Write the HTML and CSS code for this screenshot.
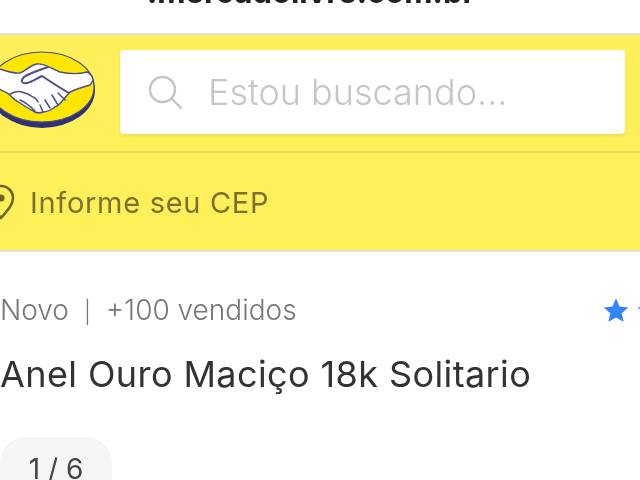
FILE: index.html
```html
<!DOCTYPE html>
<html lang="pt-BR">

<head>
    <meta charset="UTF-8">
    <meta name="viewport" content="width=device-width, initial-scale=1.0">
    <title>Anel Ouro Maciço 18k Solitario</title>
    <link rel="stylesheet" href="styles.css">
</head>

<body>
    <div class="page">
        <div class="url-bar">
            <span class="url-text">.mercadolivre.com.br</span>
        </div>
        <header class="nav">
            <div class="nav-top">
                <svg class="logo" viewBox="-10 50 106 80" aria-hidden="true">
                    <ellipse cx="42" cy="90" rx="53" ry="38" fill="#2d3277" />
                    <ellipse cx="42" cy="87" rx="52" ry="35" fill="#ffe600" stroke="#4a4f8c" stroke-width="1.2" />
                    <path d="M-10 66 C0 68 10 74 20 73 C26 71 30 65 37 64 C44 63 50 68 60 72 C70 74 80 74 87 72 C91 74 93 77 93 80 C92 83 91 84 90 85 C83 87 76 89 70 92 C67 95 65 98 63 100 C60 104 58 106 55 107 C51 110 47 112 43 112 C40 113 37 113 35 112 C29 109 25 106 20 103 C15 100 12 98 10 95 C6 92 3 90 -10 86Z" fill="#fff" stroke="#4a4f8c" stroke-width="1.4" stroke-linejoin="round" />
                    <path d="M48 67 C40 70 30 73 24 77 C20 81 22 84 27 83 C32 82 37 78 42 76 C48 80 60 88 69 93" fill="none" stroke="#4a4f8c" stroke-width="2" stroke-linecap="round" stroke-linejoin="round" />
                    <path d="M10 94 C14 92 18 91 22 92 C26 93 30 95 33 97 C36 98 37 100 38 102 M58 93 L65 100 M52 95 L58 105 M45 100 L50 108 M40 105 L43 112 M20 100 C25 102 30 106 35 111" fill="none" stroke="#4a4f8c" stroke-width="1.5" stroke-linecap="round" />
                </svg>
                <div class="search">
                    <svg class="search-icon" viewBox="0 0 34 34" aria-hidden="true">
                        <circle cx="14.5" cy="14.5" r="12.5" fill="none" stroke="#c4c4c4" stroke-width="2.4" />
                        <path d="M23.5 23.5 L33 33" fill="none" stroke="#c4c4c4" stroke-width="2.4" stroke-linecap="round" />
                    </svg>
                    <span class="search-text">Estou buscando...</span>
                </div>
            </div>
            <div class="nav-cep">
                <svg class="pin" viewBox="0 0 28 36" aria-hidden="true">
                    <path d="M14 34 C8 27 2 21 2 14 A12 12 0 0 1 26 14 C26 21 20 27 14 34Z" fill="none" stroke="#6f6428" stroke-width="2.6" stroke-linejoin="round" />
                    <circle cx="14" cy="14" r="3.6" fill="#6f6428" />
                </svg>
                <span class="cep-text">Informe seu CEP</span>
            </div>
        </header>
        <section class="product">
            <div class="meta">
                <span class="meta-text">Novo<span class="meta-sep">|</span>+100 vendidos</span>
                <span class="rating">
                    <svg class="star" viewBox="0 0 24 24" aria-hidden="true">
                        <path d="M12 0.5 L15.4 8.2 L23.8 9 L17.5 14.6 L19.3 22.9 L12 18.6 L4.7 22.9 L6.5 14.6 L0.2 9 L8.6 8.2Z" fill="#3483fa" />
                    </svg>
                    <svg class="star" viewBox="0 0 24 24" aria-hidden="true">
                        <path d="M12 0.5 L15.4 8.2 L23.8 9 L17.5 14.6 L19.3 22.9 L12 18.6 L4.7 22.9 L6.5 14.6 L0.2 9 L8.6 8.2Z" fill="#3483fa" />
                    </svg>
                </span>
            </div>
            <h1 class="title">Anel Ouro Maciço 18k Solitario</h1>
            <div class="counter">1 / 6</div>
        </section>
    </div>
</body>

</html>
```

FILE: styles.css
```css
* {
    box-sizing: border-box;
}

html,
body {
    margin: 0;
    height: 100%;
    overflow: hidden;
    background-color: #fff;
}

.page {
    width: 640px;
    height: 480px;
    overflow: hidden;
    font-family: 'Inter', 'Lato', sans-serif;
    filter: blur(0.5px);
}

.url-bar {
    height: 33px;
    display: flex;
    justify-content: center;
    align-items: flex-end;
    overflow: hidden;
    padding-bottom: 26px;
    padding-right: 18px;
}

.url-text {
    font-size: 31px;
    line-height: 30px;
    font-weight: 700;
    color: #222;
    white-space: nowrap;
    flex-shrink: 0;
}

.nav {
    background-color: #fff059;
    border-top: 2px solid #e0e0e0;
    border-bottom: 2px solid #e2e2e2;
}

.nav-top {
    height: 118px;
    display: flex;
    align-items: flex-start;
    padding-top: 15px;
    border-bottom: 2px solid #e8d94e;
    overflow: hidden;
}

.logo {
    width: 106px;
    height: 80px;
    margin-left: -10px;
    flex-shrink: 0;
}

.search {
    width: 505px;
    height: 84px;
    margin-left: 24px;
    display: flex;
    align-items: center;
    padding-left: 28px;
    background-color: #fff;
    border-radius: 4px;
    box-shadow: 0 2px 3px rgba(0, 0, 0, 0.08);
}

.search-icon {
    width: 34px;
    height: 34px;
    flex-shrink: 0;
}

.search-text {
    margin-left: 26px;
    font-size: 36px;
    font-weight: 300;
    color: #c6c6c6;
}

.nav-cep {
    height: 97px;
    display: flex;
    align-items: center;
    overflow: hidden;
}

.pin {
    width: 28px;
    height: 36px;
    margin-left: -13px;
    flex-shrink: 0;
}

.cep-text {
    margin-left: 15px;
    padding-top: 2px;
    font-size: 29px;
    letter-spacing: 0.7px;
    color: #7d7132;
}

.meta {
    display: flex;
    justify-content: space-between;
    align-items: center;
    margin-top: 41px;
    height: 34px;
    overflow: hidden;
}

.meta-text {
    font-size: 28px;
    font-weight: 300;
    color: #777;
}

.meta-sep {
    margin: 0 15px;
    font-size: 22px;
}

.rating {
    display: flex;
    gap: 8px;
    margin-left: auto;
    margin-right: -23px;
    flex-shrink: 0;
}

.star {
    width: 26px;
    height: 25px;
    flex-shrink: 0;
}

.title {
    margin: 25px 0 0;
    font-size: 36px;
    line-height: 44px;
    font-weight: 400;
    letter-spacing: 0.4px;
    color: #333;
}

.counter {
    width: 112px;
    height: 70px;
    margin: 41px 0 0;
    padding-top: 15px;
    text-align: center;
    font-size: 28px;
    color: #444;
    background-color: #f5f5f5;
    border-radius: 26px;
}
```
